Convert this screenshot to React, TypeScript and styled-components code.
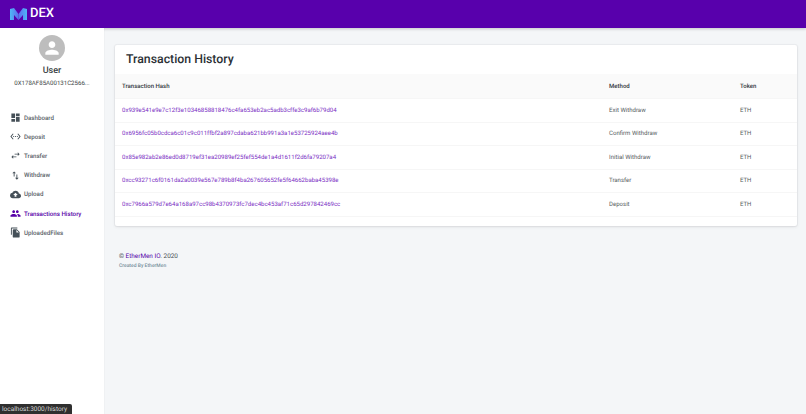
import React from "react";
import styled, { createGlobalStyle } from "styled-components";
import {
  MdDashboard,
  MdSettingsEthernet,
  MdSwapHoriz,
  MdSwapVert,
  MdCloudUpload,
  MdPeople,
  MdFileCopy,
  MdPerson,
} from "react-icons/md";

const GlobalStyle = createGlobalStyle`
  html, body { margin: 0; height: 100%; }
  body {
    font-family: Roboto, "Liberation Sans", sans-serif;
    background: #f4f6f8;
    text-rendering: geometricPrecision;
  }
  #root { height: 100%; }
  * { box-sizing: border-box; }
`;

const Page = styled.div`
  width: 806px;
  height: 414px;
  display: flex;
  flex-direction: column;
  overflow: hidden;
  position: relative;
`;

const Header = styled.header`
  height: 28px;
  flex: none;
  background: #5800ac;
  display: flex;
  align-items: center;
  padding-left: 10px;
  gap: 3px;
  box-shadow: 0 1px 3px rgba(0, 0, 0, 0.2);
`;

const LogoText = styled.span`
  color: #fff;
  font-size: 13px;
  font-weight: 500;
  line-height: 30px;
`;

const Body = styled.div`
  flex: 1;
  display: flex;
  min-height: 0;
`;

const Sidebar = styled.aside`
  width: 104px;
  flex: none;
  background: #fff;
  padding: 7px 0 0;
  display: flex;
  flex-direction: column;
  box-shadow: 0 0 1px rgba(0, 0, 0, 0.12);
`;

const Profile = styled.div`
  display: flex;
  flex-direction: column;
  align-items: center;
  padding-bottom: 19px;
`;

const Avatar = styled.div`
  width: 26px;
  height: 26px;
  border-radius: 50%;
  background: #bdbdbd;
  color: #fff;
  display: flex;
  align-items: center;
  justify-content: center;
`;

const UserName = styled.div`
  font-size: 9px;
  font-weight: 500;
  color: #3a3f44;
  line-height: 12px;
  margin-top: 4px;
`;

const Address = styled.div`
  font-size: 6.1px;
  color: #3a3f44;
  line-height: 10px;
  margin-top: 2px;
  white-space: nowrap;
`;

const Nav = styled.nav`
  display: flex;
  flex-direction: column;
`;

const NavItem = styled.a<{ $active?: boolean }>`
  height: 19.2px;
  display: flex;
  align-items: center;
  gap: 3px;
  padding-left: 10px;
  font-size: 6.2px;
  font-weight: 500;
  color: ${(p) => (p.$active ? "#5600a8" : "#5a6268")};
  white-space: nowrap;
  svg {
    color: ${(p) => (p.$active ? "#5600a8" : "#455058")};
    flex: none;
  }
`;

const Main = styled.main`
  flex: 1;
  padding: 17px 9px 0 11px;
  min-width: 0;
`;

const Card = styled.section`
  background: #fff;
  border-radius: 2px;
  box-shadow: 0 0 0 1px rgba(63, 63, 68, 0.04), 0 1px 3px 0 rgba(63, 63, 68, 0.12);
  padding-bottom: 9px;
`;

const Title = styled.h1`
  margin: 0;
  height: 29px;
  padding-left: 11px;
  font-size: 12.3px;
  font-weight: 500;
  color: #2b3035;
  line-height: 30px;
`;

const Table = styled.div`
  display: flex;
  flex-direction: column;
`;

const Row = styled.div<{ $head?: boolean }>`
  display: grid;
  grid-template-columns: 487px 131px 1fr;
  align-items: center;
  height: ${(p) => (p.$head ? "25px" : "23.5px")};
  padding-left: 7px;
  font-size: 6.05px;
  background: ${(p) => (p.$head ? "#fafafa" : "#fff")};
  color: ${(p) => (p.$head ? "#32373c" : "#555b60")};
  font-weight: ${(p) => (p.$head ? 500 : 400)};
  border-bottom: 1px solid #f6f6f6;
`;

const HashLink = styled.a`
  color: #7b2fc4;
  white-space: nowrap;
`;

const Footer = styled.footer`
  padding: 25px 4px 0;
`;

const Copyright = styled.div`
  font-size: 6.4px;
  color: #4a4f55;
  line-height: 10px;
`;

const BrandLink = styled.a`
  color: #5600a8;
`;

const Credit = styled.div`
  font-size: 5px;
  font-weight: 500;
  color: #78909c;
  line-height: 8px;
  margin-top: 1px;
`;

const StatusTip = styled.div`
  position: absolute;
  left: 0;
  bottom: 0;
  height: 10px;
  width: 72px;
  background: #2f2f2f;
  color: #d8d8d8;
  font-size: 6.5px;
  line-height: 10px;
  padding-left: 2px;
  border-top-right-radius: 2px;
`;

const navItems = [
  { label: "Dashboard", icon: MdDashboard },
  { label: "Deposit", icon: MdSettingsEthernet },
  { label: "Transfer", icon: MdSwapHoriz },
  { label: "Withdraw", icon: MdSwapVert },
  { label: "Upload", icon: MdCloudUpload },
  { label: "Transactions History", icon: MdPeople, active: true },
  { label: "UploadedFiles", icon: MdFileCopy },
];

const transactions = [
  ["0x939e541e9e7c12f3e10346858818476c4fa653eb2ac5adb3cffe3c9af6b79d04", "Exit Withdraw"],
  ["0x6956fc05b0cdca6c01c9c011ffbf2a897cdaba621bb991a3a1e53725924aee4b", "Confirm Withdraw"],
  ["0x85e982ab2e86ed0d8719ef31ea20989ef25fef554de1a4d1611f2d6fa79207a4", "Initial Withdraw"],
  ["0xcc93271c6f0161da2a0039e567e789b8f4ba267605652fe5f64662baba45398e", "Transfer"],
  ["0xc7966a579d7e64a168a97cc98b4370973fc7dec4bc453af71c65d297842469cc", "Deposit"],
];

function Logo() {
  return (
    <svg width="17" height="13" viewBox="0 0 17 13">
      <defs>
        <linearGradient id="logoLeft" x1="0" x2="1" y1="0" y2="0">
          <stop offset="0" stopColor="#4fb8f5" />
          <stop offset="1" stopColor="#5c6cf0" />
        </linearGradient>
        <linearGradient id="logoRight" x1="0" x2="1" y1="0" y2="0">
          <stop offset="0" stopColor="#5c6cf0" />
          <stop offset="1" stopColor="#4fb8f5" />
        </linearGradient>
      </defs>
      <path d="M0 1 L4 0 L8.5 6 L8.5 12 L4 7 L4 12 L0 12 Z" fill="url(#logoLeft)" />
      <path d="M17 1 L13 0 L8.5 6 L8.5 12 L13 7 L13 12 L17 12 Z" fill="url(#logoRight)" />
    </svg>
  );
}

export default function App() {
  return (
    <Page>
      <GlobalStyle />
      <Header>
        <Logo />
        <LogoText>DEX</LogoText>
      </Header>
      <Body>
        <Sidebar>
          <Profile>
            <Avatar>
              <MdPerson size={20} />
            </Avatar>
            <UserName>User</UserName>
            <Address>0X178AF85A00131C2566...</Address>
          </Profile>
          <Nav>
            {navItems.map((item) => (
              <NavItem key={item.label} $active={item.active}>
                <item.icon size={11} />
                {item.label}
              </NavItem>
            ))}
          </Nav>
        </Sidebar>
        <Main>
          <Card>
            <Title>Transaction History</Title>
            <Table>
              <Row $head>
                <span>Transaction Hash</span>
                <span>Method</span>
                <span>Token</span>
              </Row>
              {transactions.map(([hash, method]) => (
                <Row key={hash}>
                  <HashLink>{hash}</HashLink>
                  <span>{method}</span>
                  <span>ETH</span>
                </Row>
              ))}
            </Table>
          </Card>
          <Footer>
            <Copyright>
              © <BrandLink>EtherMen</BrandLink> <BrandLink>IO</BrandLink>. 2020
            </Copyright>
            <Credit>Created By EtherMen</Credit>
          </Footer>
        </Main>
      </Body>
      <StatusTip>localhost:3000/history</StatusTip>
    </Page>
  );
}
